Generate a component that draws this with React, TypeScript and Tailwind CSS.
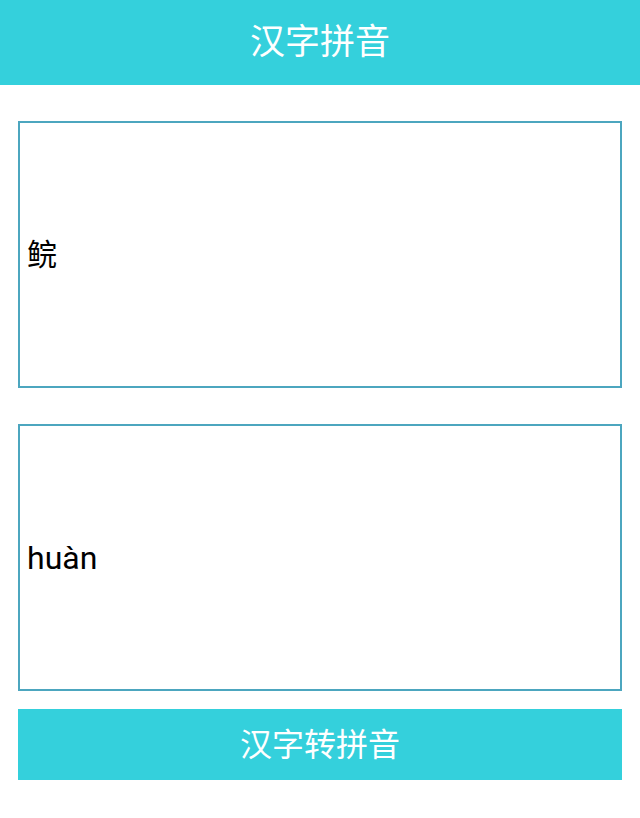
import React, { useState } from "react";

const font = { fontFamily: 'Roboto, "Noto Sans CJK SC", sans-serif' };

export default function App() {
  const [text] = useState("鲩");
  const [pinyin] = useState("huàn");

  return (
    <div className="min-h-[818px] w-full bg-white" style={font}>
      <header className="flex h-[85px] items-center justify-center bg-[#34d0dc]">
        <h1 className="text-[35px] font-normal leading-none text-white">汉字拼音</h1>
      </header>
      <main className="flex flex-col px-[18px] pt-[36px]">
        <div className="flex h-[267px] items-center border-2 border-[#4ca6bf] px-[7px]">
          <span className="text-[30px] leading-none text-black">{text}</span>
        </div>
        <div className="mt-[36px] flex h-[267px] items-center border-2 border-[#4ca6bf] px-[7px]">
          <span className="text-[32px] leading-none text-black">{pinyin}</span>
        </div>
        <button className="mt-[18px] flex h-[71px] items-center justify-center bg-[#34d0dc]">
          <span className="text-[32px] leading-none text-white">汉字转拼音</span>
        </button>
      </main>
    </div>
  );
}
